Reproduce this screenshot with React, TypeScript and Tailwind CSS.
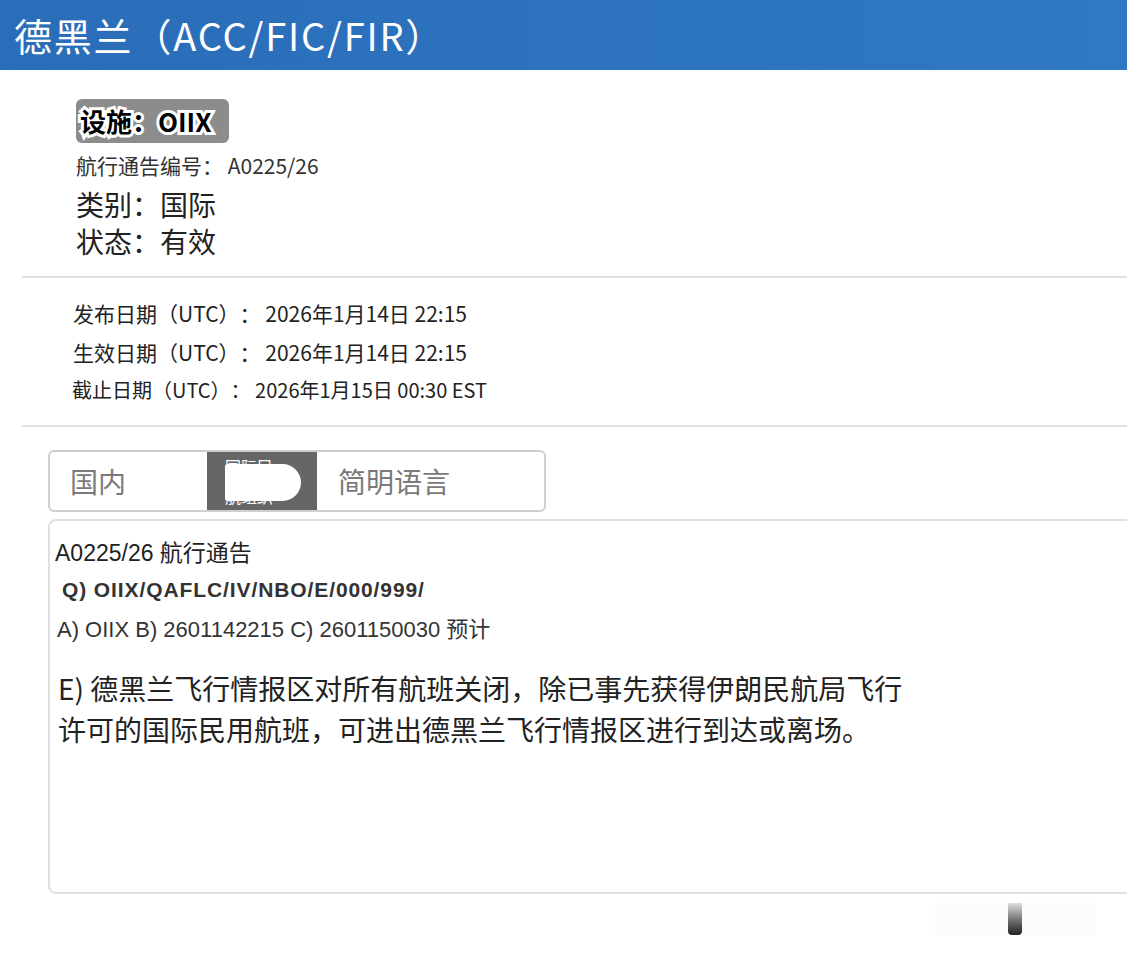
const cjk = "font-['Noto_Sans_CJK_SC',sans-serif]";
const mixed = "font-['Liberation_Sans','Noto_Sans_CJK_SC',sans-serif]";

const Divider = () => <div className="ml-[22px] h-[2px] bg-[#e0e0e0]" />;

const dates = [
  { label: "发布日期（UTC）： ", value: "2026年1月14日 22:15", size: "text-[21px] pl-[1px]" },
  { label: "生效日期（UTC）： ", value: "2026年1月14日 22:15", size: "text-[21px] pl-[1px]" },
  { label: "截止日期（UTC）： ", value: "2026年1月15日 00:30 EST", size: "text-[20px]" },
];

const App = () => {
  return (
    <div className={`w-[1127px] h-[960px] overflow-hidden bg-white text-[#222] [text-spacing-trim:space-all] ${cjk}`}>
      {/* header */}
      <div className="h-[70px] flex items-center pl-[14px] bg-gradient-to-r from-[#2a6db8] to-[#2f78c4]">
        <h1 className="text-[38px] text-white leading-none tracking-[1.8px]">德黑兰（ACC/FIC/FIR）</h1>
      </div>

      {/* facility info */}
      <div className="pl-[76px] pt-[29px]">
        <div className="w-[153px] h-[44px] rounded-[6px] bg-[#8c8c8c] flex items-center pl-[4px]">
          <span className="text-[26px] font-bold text-black leading-none [-webkit-text-stroke:6px_white] [paint-order:stroke_fill]">
            设施：OIIX
          </span>
        </div>
        <div className="mt-[8px] text-[21px] leading-[28px] text-[#333]">航行通告编号： A0225/26</div>
        <div className="mt-[7px] text-[28px] leading-[37px]">类别：国际</div>
        <div className="text-[28px] leading-[37px]">状态：有效</div>
      </div>

      <div className="mt-[16px]">
        <Divider />
      </div>

      {/* dates */}
      <div className="pl-[72px] pt-[16px]">
        {dates.map((d) => (
          <div key={d.label} className={`${d.size} leading-[38.5px] text-[#222] whitespace-pre`}>
            {d.label}
            {d.value}
          </div>
        ))}
      </div>

      <div className="mt-[15px]">
        <Divider />
      </div>

      {/* tabs */}
      <div className="ml-[48px] mt-[23px] w-[498px] h-[62px] flex border-2 border-[#cfcfcf] rounded-[6px] overflow-hidden">
        <div className="w-[157px] flex items-center pl-[20px] text-[28px] text-[#7a7a7a]">国内</div>
        <div className="relative w-[110px] bg-[#666] flex flex-col justify-center pl-[18px] text-[16px] leading-[30px] text-white">
          <span>国际民</span>
          <span>航组织</span>
          <div className="absolute left-[18px] top-[12px] w-[76px] h-[37px] bg-white rounded-r-[20px] rounded-l-[3px]" />
        </div>
        <div className="flex-1 flex items-center pl-[21px] text-[28px] text-[#7a7a7a]">简明语言</div>
      </div>

      {/* notam body */}
      <div className="ml-[48px] mt-[7px] w-[1100px] h-[375px] border-2 border-[#e0e0e0] rounded-l-[8px] pl-[5px] pt-[14px]">
        <div className={`text-[23px] leading-[36px] text-[#222] ${mixed}`}>A0225/26 航行通告</div>
        <div className="ml-[7px] text-[21px] leading-[38px] font-bold tracking-[0.9px] text-[#333] font-['Liberation_Sans',sans-serif]">
          Q) OIIX/QAFLC/IV/NBO/E/000/999/
        </div>
        <div className={`ml-[2px] text-[22px] leading-[42px] text-[#333] ${mixed}`}>
          A) OIIX B) 2601142215 C) 2601150030 预计
        </div>
        <div className="ml-[3px] mt-[17px] text-[28px] leading-[41px] text-[#222]">
          <div>E) 德黑兰飞行情报区对所有航班关闭，除已事先获得伊朗民航局飞行</div>
          <div>许可的国际民用航班，可进出德黑兰飞行情报区进行到达或离场。</div>
        </div>
      </div>

      {/* faint watermark */}
      <div className="flex justify-end pr-[32px] mt-[9px]">
        <div className="relative w-[160px] h-[32px] bg-[#fbfbfb]">
          <div className="absolute left-[73px] top-0 w-[14px] h-[32px] rounded-b-[4px] bg-gradient-to-b from-[#e0e0e0] to-[#222]" />
        </div>
      </div>
    </div>
  );
};

export default App;
